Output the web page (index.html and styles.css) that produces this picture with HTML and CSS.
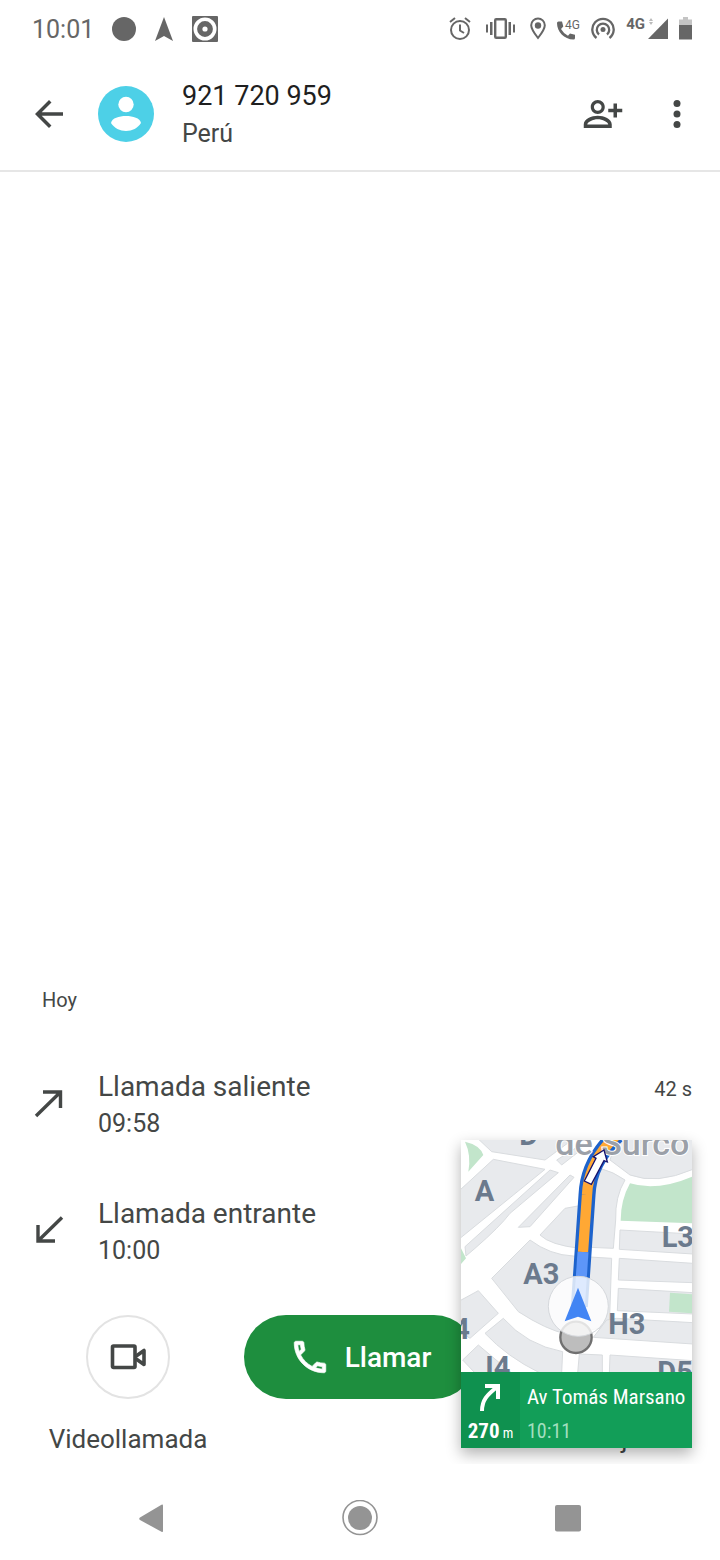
FILE: index.html
```html
<!DOCTYPE html>
<html lang="es">
<head>
    <meta charset="UTF-8">
    <meta name="viewport" content="width=device-width, initial-scale=1.0">
    <title>921 720 959</title>
    <link rel="stylesheet" href="styles.css">
</head>
<body>
    <!-- Status bar -->
    <div class="status-bar">
        <div class="status-left">
            <span class="clock">10:01</span>
            <svg width="24" height="26" viewBox="0 0 24 26"><circle cx="12" cy="13" r="12"/></svg>
            <svg width="20" height="26" viewBox="0 0 20 26"><path d="M10 1L19 25L10 20L1 25Z"/></svg>
            <svg width="26" height="26" viewBox="0 0 26 26">
                <rect width="26" height="26" rx="1"/>
                <circle cx="13" cy="13" r="9.7" fill="none" stroke="#fff" stroke-width="3.6"/>
                <circle cx="13" cy="13" r="2.6" fill="#fff"/>
            </svg>
        </div>
        <div class="status-right">
            <svg width="22" height="24" viewBox="0 0 22 24">
                <g fill="none" stroke="#666" stroke-width="2">
                    <circle cx="11" cy="13" r="9"/>
                    <path d="M11 7.500v6l4 2.500M1 5L6 1M21 5L16 1"/>
                </g>
            </svg>
            <svg class="vibrate" width="29" height="24" viewBox="0 0 29 24">
                <rect x="9.200" y="2.200" width="10.600" height="18.600" rx="1" fill="none" stroke="#666" stroke-width="2.400"/>
                <path d="M0 7.500h2v8H0zM4 5h2.500v13H4zM22.500 5H25v13h-2.500zM27 7.500h2v8h-2z"/>
            </svg>
            <svg width="16" height="24" viewBox="0 0 16 24">
                <path d="M8 1.500C4.500 1.500 1.200 4.300 1.200 8.300C1.200 12.500 8 21 8 21S14.800 12.500 14.800 8.300C14.800 4.300 11.500 1.500 8 1.500Z" fill="none" stroke="#666" stroke-width="2"/>
                <circle cx="8" cy="8.500" r="3.200"/>
            </svg>
            <svg width="23" height="24" viewBox="0 0 23 24">
                <path d="M0 6Q0 4.500 1.500 4.500H5L6.300 9.500L4 12Q6.500 16.500 11 18.800L13 16.500L18 17.800V21Q18 22.500 16.500 22.500C7 22.500 0 14.500 0 6Z"/>
                <text x="8" y="12" font-size="12">4G</text>
            </svg>
            <svg width="24" height="24" viewBox="0 0 24 24">
                <g fill="none" stroke="#666" stroke-width="2.300">
                    <path d="M5.500 21A10.700 10.700 0 1 1 18.500 21"/>
                    <path d="M8 17.500A6.200 6.200 0 1 1 16 17.500"/>
                </g>
                <circle cx="12" cy="12.500" r="2.500"/>
            </svg>
            <span class="network">4G</span>
            <svg width="20" height="24" viewBox="0 0 20 24">
                <path d="M20 1.500V22H0Z"/>
                <path d="M3 1l2 3H1zM3 8l2-3H1z" fill="#bbb"/>
            </svg>
            <svg width="13" height="24" viewBox="0 0 13 24">
                <path d="M0 2.500h4V0h5v2.500h4V9H0z" fill="#c4c4c4"/>
                <path d="M0 8h13v14.500H0z"/>
            </svg>
        </div>
    </div>

    <!-- Contact header -->
    <header class="header">
        <button class="icon-btn" aria-label="Atrás">
            <svg width="42" height="42" viewBox="0 0 24 24"><path d="M20 11H7.830l5.590-5.590L12 4l-8 8 8 8 1.410-1.410L7.830 13H20v-2z"/></svg>
        </button>
        <svg class="avatar" width="56" height="56" viewBox="0 0 56 56">
            <circle cx="28" cy="28" r="28" fill="#4dd0e7"/>
            <circle cx="28" cy="18.500" r="7.700" fill="#fff"/>
            <path d="M13 37C14 32 21 30 28 30S42 32 43 37C40 42 34 45 28 45S16 42 13 37Z" fill="#fff"/>
        </svg>
        <div class="contact">
            <h1>921 720 959</h1>
            <p>Perú</p>
        </div>
        <button class="icon-btn" aria-label="Agregar contacto">
            <svg width="42" height="42" viewBox="0 0 24 24"><path d="M13 8c0-2.210-1.790-4-4-4S5 5.790 5 8s1.790 4 4 4 4-1.790 4-4zm-1.800 0c0 1.200-1 2.200-2.200 2.200S6.800 9.200 6.800 8 7.800 5.800 9 5.800s2.200 1 2.200 2.200zM1 18v2h16v-2c0-3.200-4.500-5-8-5s-8 1.800-8 5zm2 0c.2-1.500 3.300-3 6-3 2.690 0 5.770 1.500 6 3H3zM20 14v-3h3V9h-3V6h-2v3h-3v2h3v3h2z"/></svg>
        </button>
        <button class="icon-btn" aria-label="Más opciones">
            <svg width="42" height="42" viewBox="0 0 24 24"><circle cx="12" cy="6" r="2"/><circle cx="12" cy="12" r="2"/><circle cx="12" cy="18" r="2"/></svg>
        </button>
    </header>

    <!-- Call history -->
    <main class="history">
        <h2>Hoy</h2>
        <ul>
            <li>
                <svg width="42" height="42" viewBox="0 0 42 42"><path d="M8 32L32 8.500M15 8H32.500V24" fill="none" stroke="#444746" stroke-width="3.400"/></svg>
                <div class="call-info">
                    <h3>Llamada saliente</h3>
                    <p>09:58</p>
                </div>
                <span class="duration">42 s</span>
            </li>
            <li>
                <svg width="42" height="42" viewBox="0 0 42 42"><path d="M34 6.500L11 29M27 30H10V14" fill="none" stroke="#444746" stroke-width="3.400"/></svg>
                <div class="call-info">
                    <h3>Llamada entrante</h3>
                    <p>10:00</p>
                </div>
            </li>
        </ul>
    </main>

    <!-- Actions -->
    <section class="actions">
        <div class="action">
            <button class="round-btn" id="video" aria-labelledby="video-label">
                <svg width="42" height="42" viewBox="0 0 42 42">
                    <g fill="none" stroke="#444746" stroke-width="3.600" stroke-linejoin="round">
                        <rect x="5.500" y="10" width="22.500" height="21.500" rx="1"/>
                        <path d="M28.500 20.500L37 14.500V28.500L28.500 22.500"/>
                    </g>
                </svg>
            </button>
            <label id="video-label" for="video">Videollamada</label>
        </div>
        <button class="call-btn">
            <svg width="42" height="42" viewBox="0 0 24 24"><path d="M6.540 5c.060.890.210 1.760.450 2.590l-1.200 1.200c-.410-1.200-.670-2.470-.760-3.790h1.510m9.860 12.020c.850.240 1.720.390 2.600.450v1.490c-1.320-.090-2.590-.350-3.800-.750l1.200-1.190M7.500 3H4c-.550 0-1 .450-1 1 0 9.390 7.610 17 17 17 .550 0 1-.450 1-1v-3.490c0-.550-.450-1-1-1-1.240 0-2.450-.2-3.570-.570-.100-.040-.210-.050-.310-.050-.260 0-.510.100-.710.290l-2.200 2.200c-2.830-1.450-5.150-3.760-6.590-6.590l2.200-2.200c.280-.280.360-.670.250-1.020C8.700 6.450 8.500 5.250 8.500 4c0-.550-.450-1-1-1z" stroke="#fff" stroke-width=".4"/></svg>
            Llamar
        </button>
        <div class="action">
            <button class="round-btn" id="message" aria-labelledby="message-label"></button>
            <label id="message-label" for="message">Mensaje</label>
        </div>
    </section>

    <!-- Navigation bar -->
    <nav class="nav-bar">
        <button aria-label="Volver">
            <svg width="36" height="36" viewBox="0 0 36 36"><path d="M29 5.500V31Q29 32.500 27.500 31.800L6 20Q4.500 18.500 6 17.500L27.500 4.800Q29 4 29 5.500Z"/></svg>
        </button>
        <button aria-label="Inicio">
            <svg width="36" height="36" viewBox="0 0 36 36"><circle cx="18" cy="17.500" r="17" fill="none" stroke="#949494" stroke-width="1.600"/><circle cx="18" cy="18" r="12"/></svg>
        </button>
        <button aria-label="Recientes">
            <svg width="36" height="36" viewBox="0 0 36 36"><rect x="5" y="5" width="26" height="26.500" rx="2"/></svg>
        </button>
    </nav>

    <!-- Floating navigation window -->
    <aside class="map-window">
        <svg class="map" viewBox="33 30 693 696">
            <rect x="33" y="30" width="693" height="696" fill="#fff"/>
            <g fill="#e8eaed" stroke="#d9dcdf" stroke-width="3">
                <path d="M85 27H370L285 90L125 65Z"/>
                <path d="M130 88L285 118L30 325V180Z"/>
                <path d="M45 350L300 120L325 128L180 250Q150 290 75 355L48 378Z"/>
                <path d="M205 292L360 135L372 142L240 290Z"/>
                <path d="M320 90L400 40L390 62L335 105Z"/>
                <path d="M270 315L345 235L400 225L390 355Q300 345 270 315Z"/>
                <path d="M125 445L240 330Q300 375 370 378L485 385L478 590L350 612Q290 600 205 545Z"/>
                <path d="M450 115Q490 125 525 150Q495 200 497 270L490 355L420 352L435 190Z"/>
                <path d="M500 27H729V118Q620 165 540 135L480 90Z"/>
                <path d="M510 300L729 312V372L508 358Z"/>
                <path d="M508 385L729 400V458L505 450Z"/>
                <path d="M505 475L729 488V552L502 542Z"/>
                <path d="M500 565L729 578V642L430 622L470 570Z"/>
                <path d="M480 675L729 692V729H478Z"/>
                <path d="M388 672L457 675V729H383Z"/>
                <path d="M105 610L160 565Q230 645 338 665L335 729H270Q170 680 105 610Z"/>
                <path d="M30 512L85 482L145 550L60 625L30 605Z"/>
                <path d="M38 690L85 645L185 729H75Z"/>
            </g>
            <g fill="#c2e5cb">
                <path d="M45 35Q90 45 100 75L55 125Q64 75 45 35Z"/>
                <path d="M540 160Q620 185 726 140V280L512 272Q512 210 540 160Z"/>
                <path d="M660 488L726 493V550L657 545Z"/>
                <path d="M33 355L48 385L33 402Z"/>
            </g>
            <g class="map-labels">
                <text x="208" y="44">D</text>
                <text x="74" y="213">A</text>
                <text x="220" y="463">A3</text>
                <text x="635" y="350">L3</text>
                <text x="475" y="613">H3</text>
                <text x="10" y="628">4</text>
                <text x="106" y="742">I4</text>
                <text x="622" y="755">D5</text>
            </g>
            <!-- route -->
            <g fill="none">
                <path d="M500 15Q415 95 411 195L388 530" stroke="#1d63cc" stroke-width="51"/>
                <path d="M500 15Q415 95 411 195L399 366" stroke="#ffa834" stroke-width="31"/>
                <path d="M399 366L388 530" stroke="#5d96f9" stroke-width="33"/>
            </g>
            <text class="district" x="316" y="75">de Surco</text>
            <path d="M403 153L438 85L430 80L462 60L472 96L462 92L424 163Z" fill="#fff" stroke="#16126e" stroke-width="4"/>
            <!-- current position -->
            <circle cx="378" cy="622" r="47" fill="#bdbdbd" stroke="#707070" stroke-width="7"/>
            <circle cx="385" cy="529" r="90" fill="#fff" fill-opacity=".8" stroke="#d5d8dc" stroke-width="3"/>
            <path d="M384 473L424 574L384 560L344 574Z" fill="#4285f4"/>
        </svg>
        <div class="directions">
            <div class="turn">
                <svg width="26" height="32" viewBox="0 0 26 32"><path d="M4 30C4 19 9 14 19 6M7 5H20V18" fill="none" stroke="#fff" stroke-width="4"/></svg>
                <span><b>270</b> m</span>
            </div>
            <div class="street">
                <strong>Av Tomás Marsano</strong>
                <span>10:11</span>
            </div>
        </div>
    </aside>
</body>
</html>
```
FILE: styles.css
```css
* {
    box-sizing: border-box;
}
body {
    position: relative;
    display: flex;
    flex-direction: column;
    min-height: 100vh;
    margin: 0;
    background-color: #fff;
    color: #444746;
    font-family: Roboto, "Liberation Sans", sans-serif;
}
h1, h2, h3, p, ul {
    margin: 0;
    padding: 0;
    font-weight: 400;
}
svg {
    display: block;
    flex-shrink: 0;
}
button {
    padding: 0;
    border: none;
    background: none;
    font-family: inherit;
    cursor: pointer;
}

/* Status bar */
.status-bar {
    display: flex;
    justify-content: space-between;
    align-items: center;
    height: 58px;
    padding: 0 28px 0 32px;
    color: #666;
    fill: #666;
}
.status-left {
    display: flex;
    align-items: center;
    gap: 18px;
}
.clock {
    padding-top: 2px;
    font-size: 25px;
    line-height: 32px;
}
.status-right {
    display: flex;
    align-items: center;
    gap: 11px;
}
.vibrate {
    margin: 0 4px;
}
.network {
    height: 26px;
    font-size: 15px;
    font-weight: 700;
    line-height: 16px;
}
.status-right .network + svg {
    margin-left: -8px;
}

/* Header */
.header {
    display: flex;
    align-items: center;
    height: 114px;
    padding: 0 22px 0 28px;
    border-bottom: 2px solid #e6e6e6;
}
.icon-btn {
    fill: #444746;
}
.avatar {
    margin: 0 28px;
}
.contact {
    flex: 1;
    padding-top: 2px;
}
.contact h1 {
    color: #1f1f1f;
    font-size: 27px;
    line-height: 37px;
}
.contact p {
    font-size: 25px;
    line-height: 37px;
}
.icon-btn + .icon-btn {
    margin-left: 32px;
}

/* Call history */
.history {
    flex: 1;
    display: flex;
    flex-direction: column;
    justify-content: flex-end;
    padding: 0 28px 20px;
}
.history h2 {
    padding: 0 14px;
    margin-bottom: 27px;
    font-size: 20px;
    line-height: 28px;
}
.history ul {
    list-style: none;
}
.history li {
    display: flex;
    align-items: center;
    gap: 28px;
    height: 127px;
}
.call-info {
    flex: 1;
}
.call-info h3 {
    font-size: 28px;
    line-height: 37px;
}
.call-info p {
    font-size: 25px;
    line-height: 37px;
}
.duration {
    align-self: flex-start;
    padding-top: 30px;
    font-size: 20px;
    line-height: 37px;
}

/* Actions */
.actions {
    display: grid;
    grid-template-columns: repeat(3, 1fr);
    padding: 0 12px 6px;
}
.action {
    display: flex;
    flex-direction: column;
    align-items: center;
    gap: 21px;
}
.action label {
    font-size: 26px;
    line-height: 38px;
}
.round-btn {
    display: flex;
    align-items: center;
    justify-content: center;
    width: 84px;
    height: 84px;
    border: 2px solid #e3e3e3;
    border-radius: 50%;
}
.call-btn {
    display: flex;
    align-items: center;
    justify-content: center;
    gap: 14px;
    height: 84px;
    border-radius: 42px;
    background-color: #1e8e3e;
    color: #fff;
    fill: #fff;
    font-size: 28px;
    font-weight: 500;
}

/* Navigation bar */
.nav-bar {
    position: relative;
    z-index: 2;
    display: flex;
    justify-content: space-around;
    align-items: center;
    height: 96px;
    padding: 0 48px;
    background-color: #fff;
    fill: #949494;
}
.nav-bar button {
    padding: 12px;
    margin-top: 12px;
}

/* Floating window over the call screen */
.map-window {
    position: absolute;
    right: 28px;
    bottom: 112px;
    z-index: 1;
    width: 231px;
    box-shadow: 0 6px 14px rgba(0, 0, 0, 0.3);
}
.map {
    width: 100%;
}
.map-labels {
    fill: #6b7a8d;
    font-size: 87px;
    font-weight: 700;
}
.district {
    fill: #9ba0a8;
    stroke: #fff;
    stroke-width: 6px;
    paint-order: stroke;
    font-size: 102px;
    font-weight: 500;
}
.directions {
    display: flex;
    height: 76px;
    background-color: #129e58;
    color: #fff;
    font-family: "Roboto Condensed", Roboto, sans-serif;
    white-space: nowrap;
}
.turn {
    display: flex;
    flex-direction: column;
    flex-shrink: 0;
    align-items: center;
    gap: 6px;
    width: 59px;
    padding-top: 9px;
    background-color: #0f914f;
    font-size: 14px;
    line-height: 24px;
}
.turn b {
    font-size: 21px;
}
.street {
    display: flex;
    flex-direction: column;
    padding: 6px 0 0 7px;
}
.street strong {
    font-size: 21px;
    font-weight: 400;
    line-height: 39px;
}
.street span {
    color: #a3dfbf;
    font-size: 20px;
    line-height: 28px;
}
```
